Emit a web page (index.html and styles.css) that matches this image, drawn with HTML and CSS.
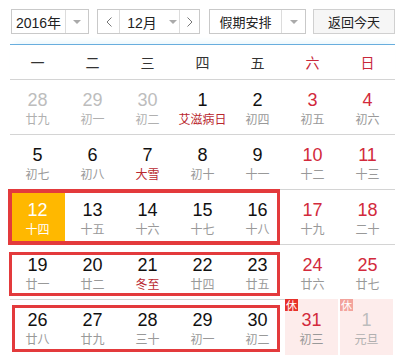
FILE: index.html
```html
<!DOCTYPE html>
<html lang="zh-CN">
<head>
<meta charset="utf-8">
<title>万年历</title>
<link rel="stylesheet" href="styles.css">
</head>
<body>
<div class="cal">
  <div class="toolbar">
    <div class="select year">
      <span class="val">2016年</span>
      <span class="drop"><i class="caret"></i></span>
    </div>
    <div class="select month">
      <span class="nav"><svg width="6" height="10" viewBox="0 0 6 10"><path d="M5.5 0.5 L1 5 L5.5 9.5" fill="none" stroke="#777" stroke-width="1"/></svg></span>
      <span class="val mval">12月<i class="caret"></i></span>
      <span class="nav"><svg width="6" height="10" viewBox="0 0 6 10"><path d="M0.5 0.5 L5 5 L0.5 9.5" fill="none" stroke="#777" stroke-width="1"/></svg></span>
    </div>
    <div class="select holiday">
      <span class="val">假期安排</span>
      <span class="drop"><i class="caret"></i></span>
    </div>
    <button class="today">返回今天</button>
  </div>

  <div class="head">
    <span>一</span><span>二</span><span>三</span><span>四</span><span>五</span><span class="we">六</span><span class="we">日</span>
  </div>

  <div class="week">
    <div class="day other"><span class="num">28</span><span class="lunar">廿九</span></div>
    <div class="day other"><span class="num">29</span><span class="lunar">初一</span></div>
    <div class="day other"><span class="num">30</span><span class="lunar">初二</span></div>
    <div class="day"><span class="num">1</span><span class="lunar fest">艾滋病日</span></div>
    <div class="day"><span class="num">2</span><span class="lunar">初四</span></div>
    <div class="day wkend"><span class="num">3</span><span class="lunar">初五</span></div>
    <div class="day wkend"><span class="num">4</span><span class="lunar">初六</span></div>
  </div>

  <div class="week">
    <div class="day"><span class="num">5</span><span class="lunar">初七</span></div>
    <div class="day"><span class="num">6</span><span class="lunar">初八</span></div>
    <div class="day"><span class="num">7</span><span class="lunar fest">大雪</span></div>
    <div class="day"><span class="num">8</span><span class="lunar">初十</span></div>
    <div class="day"><span class="num">9</span><span class="lunar">十一</span></div>
    <div class="day wkend"><span class="num">10</span><span class="lunar">十二</span></div>
    <div class="day wkend"><span class="num">11</span><span class="lunar">十三</span></div>
  </div>

  <div class="week">
    <div class="day current"><span class="num">12</span><span class="lunar">十四</span></div>
    <div class="day"><span class="num">13</span><span class="lunar">十五</span></div>
    <div class="day"><span class="num">14</span><span class="lunar">十六</span></div>
    <div class="day"><span class="num">15</span><span class="lunar">十七</span></div>
    <div class="day"><span class="num">16</span><span class="lunar">十八</span></div>
    <div class="day wkend"><span class="num">17</span><span class="lunar">十九</span></div>
    <div class="day wkend"><span class="num">18</span><span class="lunar">二十</span></div>
    <div class="mark mark1"></div>
  </div>

  <div class="week">
    <div class="day"><span class="num">19</span><span class="lunar">廿一</span></div>
    <div class="day"><span class="num">20</span><span class="lunar">廿二</span></div>
    <div class="day"><span class="num">21</span><span class="lunar fest">冬至</span></div>
    <div class="day"><span class="num">22</span><span class="lunar">廿四</span></div>
    <div class="day"><span class="num">23</span><span class="lunar">廿五</span></div>
    <div class="day wkend"><span class="num">24</span><span class="lunar">廿六</span></div>
    <div class="day wkend"><span class="num">25</span><span class="lunar">廿七</span></div>
    <div class="mark mark2"></div>
  </div>

  <div class="week last">
    <div class="day"><span class="num">26</span><span class="lunar">廿八</span></div>
    <div class="day"><span class="num">27</span><span class="lunar">廿九</span></div>
    <div class="day"><span class="num">28</span><span class="lunar">三十</span></div>
    <div class="day"><span class="num">29</span><span class="lunar">初一</span></div>
    <div class="day"><span class="num">30</span><span class="lunar">初二</span></div>
    <div class="day wkend rest"><span class="badge">休</span><span class="num">31</span><span class="lunar">初三</span></div>
    <div class="day other rest"><span class="badge light">休</span><span class="num">1</span><span class="lunar">元旦</span></div>
    <div class="mark mark3"></div>
  </div>
</div>
</body>
</html>
```

FILE: styles.css
```css
* { box-sizing: border-box; }

body {
  margin: 0;
  background: #fff;
  font-family: "Liberation Sans", "Noto Sans CJK SC", sans-serif;
  color: #111;
}

.cal {
  width: 404px;
  padding: 9px 9px 0 10px;
}

/* toolbar */
.toolbar {
  display: flex;
  height: 25px;
  padding-left: 1px;
  margin-bottom: 10px;
}

.select {
  display: flex;
  height: 25px;
  border: 1px solid #c9c9c9;
  background: #fff;
  font-family: "Noto Sans CJK SC", "Liberation Sans", sans-serif;
  font-size: 13px;
  color: #222;
}

.select .val {
  display: flex;
  align-items: center;
  justify-content: center;
}

.select .drop {
  display: flex;
  align-items: center;
  justify-content: center;
  border-left: 1px solid #dcdcdc;
}

.caret {
  display: inline-block;
  width: 0;
  height: 0;
  border-left: 4px solid transparent;
  border-right: 4px solid transparent;
  border-top: 4px solid #aaa;
}

.year { width: 78px; margin-right: 8px; }
.year .val { width: 53px; font-family: "Liberation Sans", "Noto Sans CJK SC", sans-serif; font-size: 14px; }
.year .drop { flex: 1; }

.month { width: 103px; margin-right: 9px; }
.month .nav {
  width: 22px;
  display: flex;
  align-items: center;
  justify-content: center;
}
.month .nav:first-child { border-right: 1px solid #dcdcdc; }
.month .nav:last-child { border-left: 1px solid #dcdcdc; flex: 1; }
.month .mval {
  width: 59px;
  gap: 12px;
  padding-left: 5px;
  font-family: "Liberation Sans", "Noto Sans CJK SC", sans-serif;
  font-size: 14px;
}

.holiday { width: 97px; margin-right: 7px; }
.holiday .val { width: 71px; }
.holiday .drop { flex: 1; }

.today {
  width: 82px;
  height: 25px;
  border: 1px solid #d0d0d0;
  background: #f6f6f6;
  font-family: "Noto Sans CJK SC", "Liberation Sans", sans-serif;
  font-size: 13px;
  color: #222;
  padding: 0;
}

/* header */
.head {
  display: grid;
  grid-template-columns: repeat(7, 55px);
  height: 36px;
  border-top: 1px solid #68aede;
  border-bottom: 1px solid #d4d4d4;
  box-shadow: 0 -6px 6px -4px #e9f7fd;
  align-items: center;
  justify-items: center;
  font-family: "Noto Sans CJK SC", sans-serif;
  font-size: 14px;
  color: #333;
}
.head .we { color: #c8283a; }

/* weeks */
.week {
  position: relative;
  display: grid;
  grid-template-columns: repeat(7, 55px);
  height: 55px;
  border-bottom: 1px solid #d4d4d4;
}
.week.last { border-bottom: none; }

.day {
  position: relative;
  display: flex;
  flex-direction: column;
  align-items: center;
  padding-top: 9px;
}

.num {
  font-size: 18px;
  line-height: 22px;
  color: #111;
}

.lunar {
  font-family: "Noto Sans CJK SC", sans-serif;
  font-size: 12px;
  line-height: 16px;
  color: #999;
}
.lunar.fest { color: #b9282f; }

.other .num { color: #bdbdbd; }
.other .lunar { color: #b0b0b0; }
.wkend .num { color: #d22a3c; }

.current { background: #ffb800; }
.current .num, .current .lunar { color: #fff; }

.rest {
  background: #fdeceb;
  border-right: 2px solid #fff;
  margin-top: -1px;
  padding-top: 10px;
}
.rest:last-of-type { border-right: 1px solid #fff; }

.badge {
  position: absolute;
  left: 0;
  top: 0;
  width: 13px;
  height: 12px;
  background: #e7312b;
  color: #fff;
  font-family: "Noto Sans CJK SC", sans-serif;
  font-size: 11px;
  line-height: 12px;
  text-align: center;
}
.badge.light { background: #f3a39c; }

/* annotation outlines */
.mark {
  position: absolute;
  border: 3px solid #e33a3c;
  pointer-events: none;
}
.mark1 { left: -2px; top: -1px; width: 272px; height: 56px; border-width: 4px 3px 4px 4px; }
.mark2 { left: -1px; top: 7px; width: 271px; height: 44px; }
.mark3 { left: 2px; top: 5px; width: 268px; height: 47px; }
```
